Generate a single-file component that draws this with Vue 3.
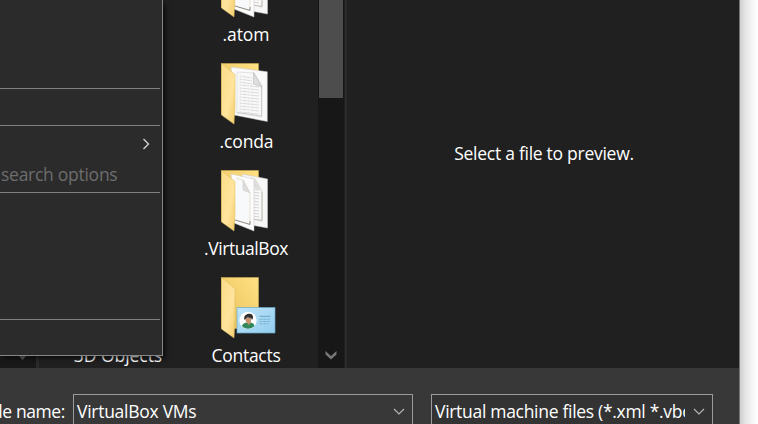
<script setup>
const columns = [
  { id: 'first', items: [{ name: '' }, { name: '' }, { name: '' }, { name: '3D Objects', cls: 'objects' }] },
  {
    id: 'second',
    items: [
      { name: '.atom', icon: 'double', cls: 'atom' },
      { name: '.conda', icon: 'text', cls: 'conda' },
      { name: '.VirtualBox', icon: 'double', cls: 'vbox' },
      { name: 'Contacts', icon: 'contact', cls: 'contacts' }
    ]
  }
]
const textRows = Array.from({ length: 13 }, (_, i) => 18 + i * 3)
</script>

<template>
  <div class="screen">
    <main class="dialog">
      <section class="browser">
        <div class="nav">
          <svg class="nav-arrow" width="9" height="7" viewBox="0 0 9 7"><path d="M0 1h9L4.5 6z" fill="#686868" /></svg>
        </div>
        <div class="files">
          <div v-for="col in columns" :key="col.id" class="column">
            <div v-for="(item, i) in col.items" :key="i" class="tile">
              <svg class="icon" width="64" height="66" viewBox="0 0 64 66">
                <defs>
                  <linearGradient id="back" x1="0" y1="1" x2="1" y2="0"><stop stop-color="#e8bf57" /><stop offset="1" stop-color="#ffe184" /></linearGradient>
                  <linearGradient id="flap" x1="0" y1="0" x2="1" y2="1"><stop stop-color="#fbdc88" /><stop offset=".6" stop-color="#ffe49c" /><stop offset="1" stop-color="#f4cc69" /></linearGradient>
                  <linearGradient id="card" x1="0" y1="0" x2="1" y2="1"><stop stop-color="#c0e5f8" /><stop offset="1" stop-color="#93cdef" /></linearGradient>
                </defs>
                <template v-if="item.icon">
                  <path d="M5.5 3.5H42.5V54.5H5.5z" fill="url(#back)" stroke="#d8b456" stroke-width=".5" />
                  <template v-if="item.icon === 'text'">
                    <path d="M15 7 51.3 11.8V61.5L18 55z" fill="#fafafa" stroke="#c9c9c9" stroke-width=".5" />
                    <path d="M21 12 38 13 46 26V57L21 53z" fill="#f8f8f8" stroke="#d8d8d8" stroke-width=".7" />
                    <path d="M45.5 26V56L21 52.5" fill="none" stroke="#c4c4c4" stroke-width=".8" />
                    <path v-for="y in textRows" :key="y" :d="`M23.5 ${y - 2}L${y < 27 ? 36 : 43} ${y}`" stroke="#d4d4d4" stroke-width=".9" stroke-dasharray="2.5 .7 4 .6" />
                    <path d="M37.5 12.5V24L46 27z" fill="#dedede" stroke="#b9b9b9" stroke-width=".6" />
                  </template>
                  <template v-else-if="item.icon === 'double'">
                    <path d="M26 7 51.5 12V61L35 58z" fill="#f7f7f7" stroke="#c8c8c8" stroke-width=".5" />
                    <path d="M34 11 39 12 46 24V53L36 52z" fill="#f9f9f9" stroke="#d9d2c0" stroke-width=".8" />
                    <path v-for="y in textRows.slice(0, 11)" :key="y" :d="`M37 ${y + 1}l6 1`" stroke="#c9c9c9" stroke-width=".8" />
                    <path d="M37 52l9 2V25" fill="none" stroke="#aaa" stroke-width=".6" />
                    <path d="M37 12v8l8 4-5-10z" fill="#dddddd" />
                    <path d="M15 7 38 12V64L18 56z" fill="#fcfcfc" stroke="#c7c7c7" stroke-width=".5" />
                    <path d="M20 11 27 13 34 26V57L19 53" fill="#f8f9fa" stroke="#e4d7b7" stroke-width=".7" />
                    <path d="M34 54V57.500L19 53" fill="none" stroke="#777" stroke-width=".8" />
                    <path d="M27 13v10l7 3z" fill="#dedede" stroke="#c6c6c6" stroke-width=".5" />
                  </template>
                  <path d="M5.5 3.5 19 14.5V46L18 64 5.5 55z" fill="url(#flap)" stroke="#d8b85e" stroke-width=".5" />
                  <g v-if="item.icon === 'contact'">
                    <path d="M21 33.5H59V59H21z" fill="url(#card)" stroke="#69a8ca" stroke-width=".7" />
                    <circle cx="32" cy="46.3" r="8.6" fill="#fff" />
                    <path d="M26 52c1-3 3-3 5-3.5h3c3 .5 4 1 4.500 3.500-3 3-9 4-12.500 0z" fill="#32885b" />
                    <path d="M29 44h6v4l-2 3-3-3z" fill="#c8936e" />
                    <path d="M28.500 46c-1-3 0-5 3-6 3-1 6 0 5.500 4l-1 2-1-2-4-.5z" fill="#333130" />
                    <path d="M43.500 42.300h11" stroke="#6aa4c3" />
                    <path d="M43.500 45.300h11m-11 2.200h11m-11 2.300h9" stroke="#70aac8" stroke-width=".8" stroke-dasharray="3 .7" />
                  </g>
                </template>
              </svg>
              <span class="label" :class="item.cls">{{ item.name }}</span>
            </div>
          </div>
        </div>
        <div class="scrollbar">
          <div class="thumb"></div>
          <svg width="12" height="10" viewBox="0 0 12 10"><path d="M.5 1 6 6l5.500-5v3.500L6 9.500.5 4.500z" fill="#777" /></svg>
        </div>
        <div class="preview"><span class="preview-text">Select a file to preview.</span></div>
      </section>
      <footer class="footer">
        <div class="caption"><span class="caption-text">File name:</span></div>
        <div class="field name-field">
          <span class="value name-value">VirtualBox VMs</span>
          <svg class="chev" width="12" height="8" viewBox="0 0 12 8"><path d="M1 1 6 6l5-5" fill="none" stroke="#b5b5b5" stroke-width="1.200" /></svg>
        </div>
        <div class="field type-field">
          <span class="value type-value">Virtual machine files (*.xml *.vbox)</span>
          <svg class="chev" width="12" height="8" viewBox="0 0 12 8"><path d="M1 1 6 6l5-5" fill="none" stroke="#b5b5b5" stroke-width="1.200" /></svg>
        </div>
      </footer>
    </main>
    <div class="shade"></div>
    <aside class="menu">
      <div class="group g1"></div>
      <div class="group g2"></div>
      <div class="group g3">
        <div class="row sub"><svg width="8" height="12" viewBox="0 0 8 12"><path d="m1.500 1 5 5-5 5" fill="none" stroke="#d2d2d2" stroke-width="1.400" /></svg></div>
        <div class="row disabled"><span class="search">search options</span></div>
      </div>
      <div class="group g4"></div>
    </aside>
  </div>
</template>

<style>
body { margin: 0; overflow: hidden; }
</style>
<style scoped>
* { box-sizing: border-box; }
.screen { position: relative; display: flex; width: 758px; height: 424px; overflow: hidden; background: #fff; color: #fff; font: 17.500px/24px "Open Sans", "Noto Sans", sans-serif; letter-spacing: -.27px; white-space: nowrap; }
.dialog { width: 740px; height: 424px; border-right: 1px solid #777; flex: none; }
.shade { flex: 1; background: linear-gradient(90deg, #cfcfcf, #e5e5e5 30%, #fafafa 80%, #fff); }
.browser { display: flex; height: 368px; overflow: hidden; background: #202020; }
.nav { width: 39px; background: #191919; border-right: 3px solid #2b2b2b; display: flex; align-items: flex-end; padding: 0 0 7px 18px; }
.files { display: flex; width: 279px; padding-left: 15px; }
.column { width: 128px; margin-top: -51px; }
.tile { height: 107px; padding-top: 4px; display: flex; flex-direction: column; align-items: center; }
.icon { flex: none; margin-right: -4px; }
.label { margin-top: 3px; flex: none; }
.objects { letter-spacing: -.05px; }
.atom { letter-spacing: -.1px; }
.conda { letter-spacing: -.15px; padding-left: 1px; }
.vbox { letter-spacing: -.43px; }
.scrollbar { width: 26px; background: #171717; display: flex; flex-direction: column; align-items: center; justify-content: space-between; padding-bottom: 8px; }
.thumb { width: 24px; height: 98px; background: #4d4d4d; }
.preview { flex: 1; border-left: 2px solid #2b2b2b; margin-left: 1px; display: flex; justify-content: center; padding: 141px 0 0 2px; }
.footer { height: 56px; background: #383838; display: flex; padding-top: 26px; }
.caption { width: 73px; display: flex; justify-content: flex-end; padding: 5px 8px 0 0; }
.caption-text { letter-spacing: -.4px; }
.field { height: 36px; border: 1px solid #9b9b9b; display: flex; padding-top: 4px; }
.name-field { width: 340px; background: #383838; }
.type-field { width: 282px; margin-left: 18px; background: #333; }
.value { padding-left: 3px; overflow: hidden; flex: none; }
.name-value { width: 319px; }
.type-value { width: 253px; letter-spacing: -.3px; }
.chev { margin-top: 9px; flex: none; }
.type-field .chev { margin-left: 8px; }
.menu { position: absolute; left: 0; top: 0; width: 163px; height: 356px; background: #2b2b2b; border-right: 1px solid #868686; border-bottom: 1px solid #868686; padding-right: 2px; box-shadow: 3px 3px 4px rgba(0,0,0,.5); }
.group { border-bottom: 1px solid #808080; }
.g1 { height: 89px; }
.g2 { height: 37px; }
.g3 { height: 67px; }
.g4 { height: 127px; }
.row { height: 31px; display: flex; }
.sub { justify-content: flex-end; padding: 12px 10px 0 0; }
.disabled { padding: 5px 0 0 1px; color: #6d6d6d; }
</style>
